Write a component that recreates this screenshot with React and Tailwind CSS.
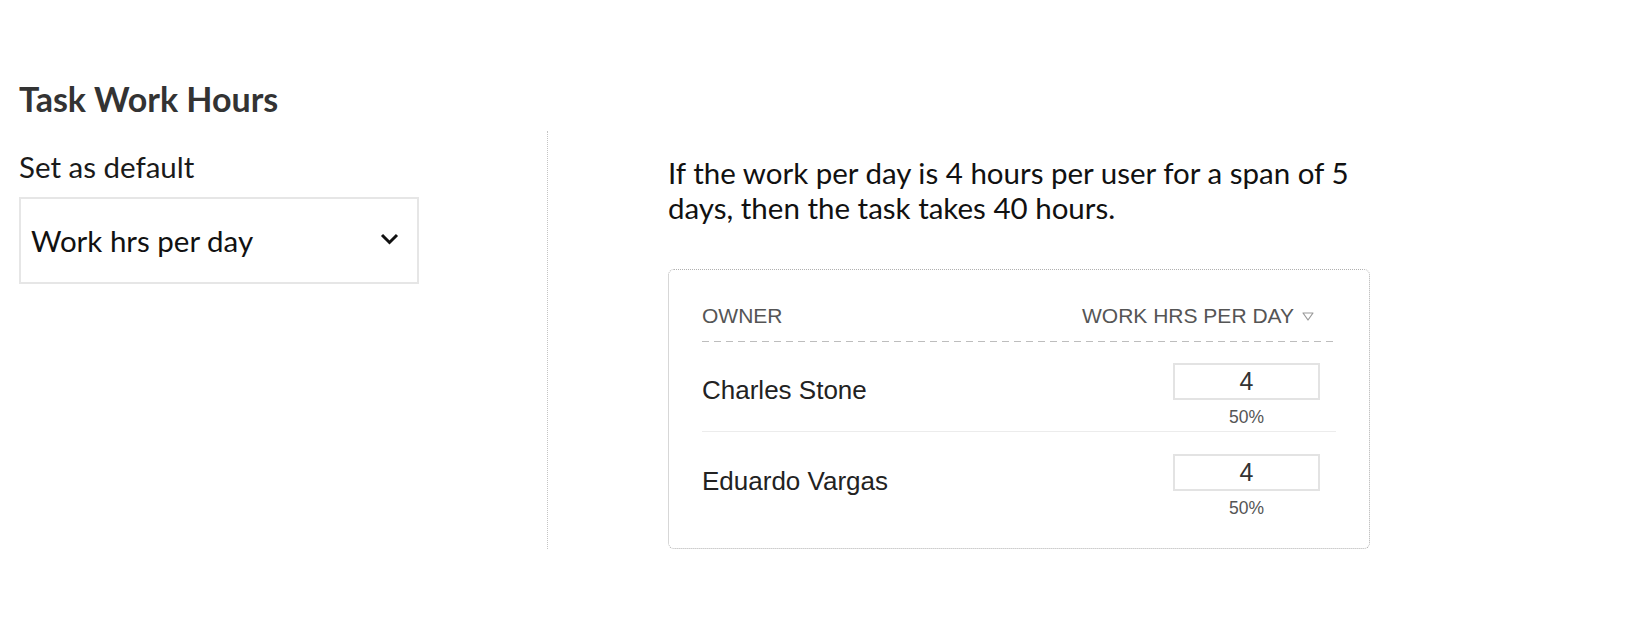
import React from 'react';

const owners = [
  { name: 'Charles Stone', hours: 4, share: '50%' },
  { name: 'Eduardo Vargas', hours: 4, share: '50%' },
];

const Chevron = () => (
  <svg width="19" height="12" viewBox="0 0 19 12" fill="none">
    <path d="M2 2 L9.5 9.5 L17 2" stroke="#111" strokeWidth="3" />
  </svg>
);

const SortTriangle = () => (
  <svg width="12" height="9" viewBox="0 0 12 9" fill="none">
    <path d="M1 1 H11 L6 8 Z" stroke="#999" strokeWidth="1.2" strokeLinejoin="round" />
  </svg>
);

const App = () => {
  return (
    <div className="min-h-[624px] bg-white pt-[80px] pl-[19px]" style={{ fontFamily: 'Lato, "Noto Sans", sans-serif' }}>
      {/* Title */}
      <h2 className="text-[34px] leading-[38px] font-bold text-[#333]">Task Work Hours</h2>

      <div className="flex mt-[13px]">
        {/* Left column */}
        <div className="w-[528px] shrink-0">
          <p className="mt-[19px] text-[29.5px] leading-[34px] text-[#1a1a1a]">Set as default</p>
          <div className="mt-[13px] w-[400px] h-[87px] border-2 border-[#e6e6e6] flex items-center justify-between pl-[10px] pr-[18px]">
            <span className="text-[29.5px] leading-[34px] text-[#111]">Work hrs per day</span>
            <span className="-mt-[3px]">
              <Chevron />
            </span>
          </div>
        </div>

        {/* Divider */}
        <div className="border-l border-dotted border-[#c4c4c4]"></div>

        {/* Right column */}
        <div className="pl-[120px] pt-[24px]">
          <p className="w-[710px] text-[29.5px] leading-[35px] text-[#111]">
            If the work per day is 4 hours per user for a span of 5 days, then the task takes 40 hours.
          </p>

          <div
            className="mt-[44px] w-[702px] border border-dotted border-[#b0b0b0] rounded-[6px] px-[33px] pt-[34px] pb-[29px]"
            style={{ fontFamily: '"Liberation Sans", Arial, sans-serif' }}
          >
            <div className="flex items-center justify-between pb-[13px] text-[21px] leading-[24px] text-[#555]">
              <span>OWNER</span>
              <span className="flex items-center gap-[8px] pr-[22px]">
                WORK HRS PER DAY
                <SortTriangle />
              </span>
            </div>
            <div className="h-px bg-[repeating-linear-gradient(to_right,#bdbdbd_0_7px,transparent_7px_12px)]"></div>

            {owners.map((o, i) => (
              <div
                key={o.name}
                className={`flex items-center justify-between pr-[16px] ${
                  i === 0 ? 'pt-[21px] pb-[3px] border-b border-[#ececec]' : 'pt-[22px]'
                }`}
              >
                <span className="pb-[12px] text-[26px] leading-[30px] text-[#222]">{o.name}</span>
                <div className="flex flex-col items-center">
                  <div className="w-[147px] h-[37px] border-2 border-[#e3e3e3] flex items-center justify-center text-[25px] text-[#333]">
                    {o.hours}
                  </div>
                  <span className="mt-[6px] text-[17.5px] leading-[22px] text-[#555]">{o.share}</span>
                </div>
              </div>
            ))}
          </div>
        </div>
      </div>
    </div>
  );
};

export default App;
